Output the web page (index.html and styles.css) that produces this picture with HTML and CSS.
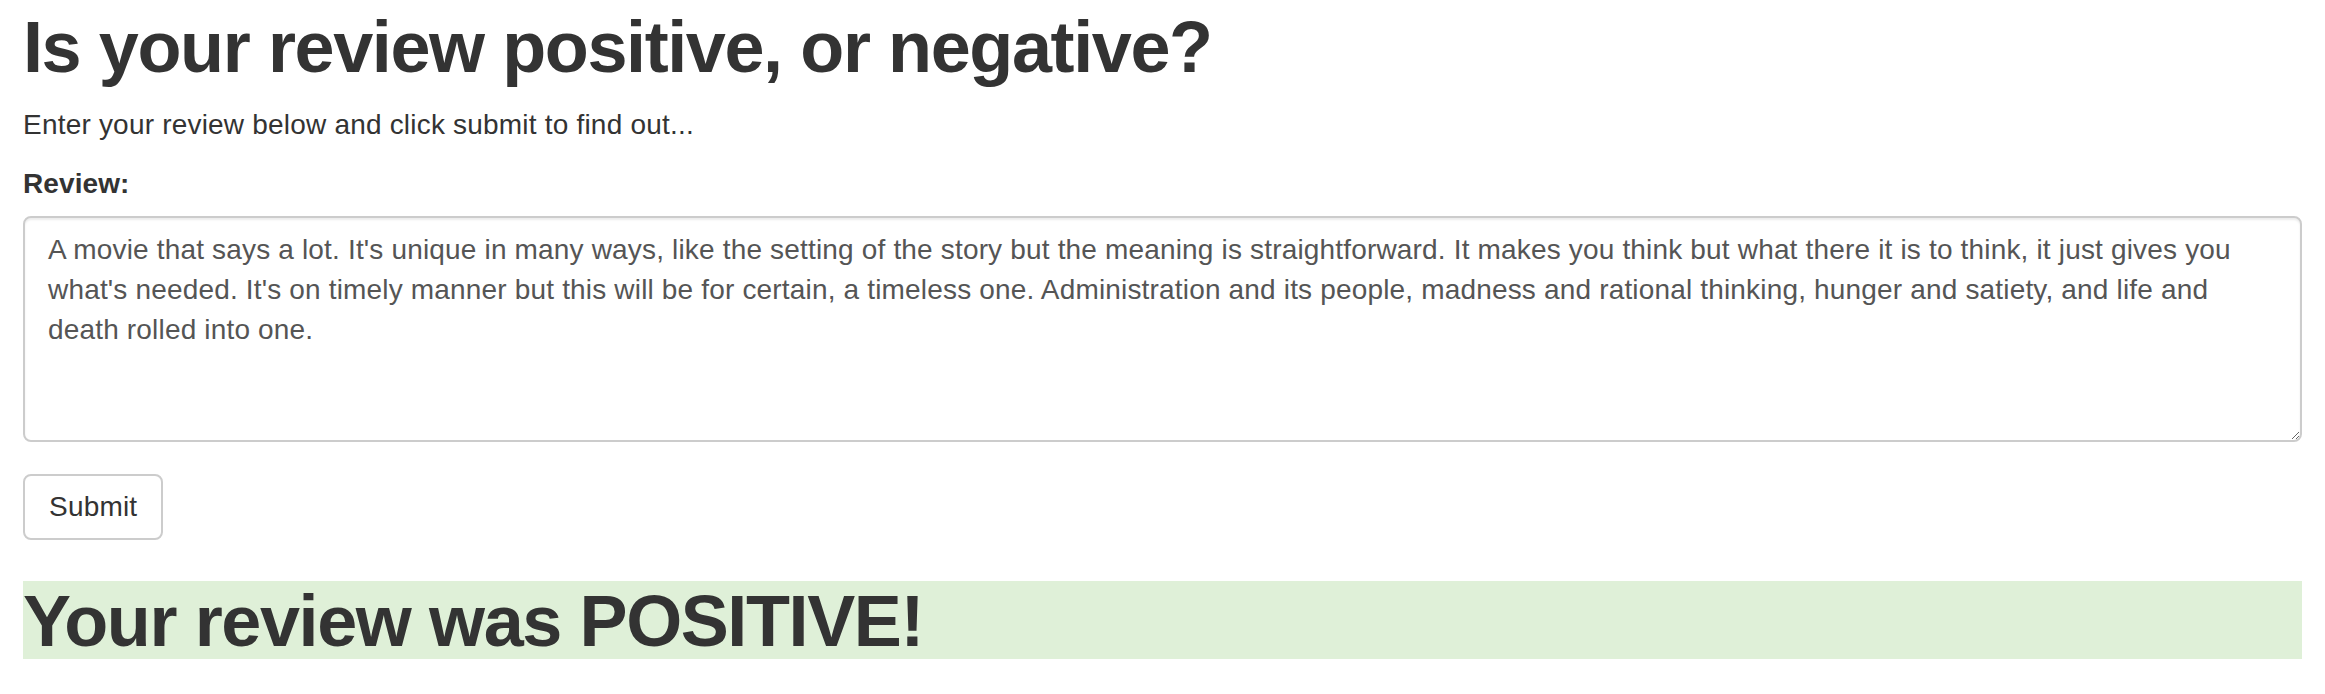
FILE: index.html
```html
<!DOCTYPE html>
<html lang="en">
<head>
<meta charset="utf-8">
<title>Sentiment</title>
<link rel="stylesheet" href="styles.css">
</head>
<body>
<div class="page">
  <h1 class="title">Is your review positive, or negative?</h1>
  <p class="lead">Enter your review below and click submit to find out...</p>
  <form class="review-form">
    <div class="form-group">
      <label class="field-label" for="review">Review:</label>
      <textarea class="review-box" id="review" name="review">A movie that says a lot. It's unique in many ways, like the setting of the story but the meaning is straightforward. It makes you think but what there it is to think, it just gives you what's needed. It's on timely manner but this will be for certain, a timeless one. Administration and its people, madness and rational thinking, hunger and satiety, and life and death rolled into one.</textarea>
    </div>
    <button type="button" class="submit-btn">Submit</button>
  </form>
  <div class="result">Your review was POSITIVE!</div>
</div>
</body>
</html>
```

FILE: styles.css
```css
html, body {
  margin: 0;
  padding: 0;
  background: #fff;
}

body {
  font-family: "Liberation Sans", Arial, Helvetica, sans-serif;
  font-size: 28px;
  line-height: 40px;
  color: #333;
}

.page {
  padding: 0 23px;
  display: flex;
  flex-direction: column;
  align-items: stretch;
}

.title {
  margin: 8px 0 18px;
  font-size: 72px;
  line-height: 79px;
  font-weight: 700;
  letter-spacing: -1.4px;
  color: #333;
}

.lead {
  margin: 0 0 19px;
  letter-spacing: 0.2px;
}

.review-form {
  display: flex;
  flex-direction: column;
  align-items: flex-start;
}

.form-group {
  display: flex;
  flex-direction: column;
  align-self: stretch;
  margin-bottom: 32px;
}

.field-label {
  font-weight: 700;
  margin-bottom: 12px;
  letter-spacing: 0.1px;
}

.review-box {
  box-sizing: border-box;
  width: 100%;
  height: 226px;
  margin: 0;
  padding: 12px 23px;
  border: 2px solid #ccc;
  border-radius: 8px;
  box-shadow: inset 0 2px 2px rgba(0, 0, 0, 0.075);
  font-family: "Liberation Sans", Arial, Helvetica, sans-serif;
  font-size: 28px;
  line-height: 40px;
  letter-spacing: 0.17px;
  color: #555;
  background: #fff;
  resize: vertical;
}

.submit-btn {
  box-sizing: border-box;
  height: 66px;
  margin: 0;
  padding: 11px 24px;
  border: 2px solid #ccc;
  border-radius: 8px;
  background: #fff;
  font-family: "Liberation Sans", Arial, Helvetica, sans-serif;
  font-size: 28px;
  line-height: 40px;
  letter-spacing: 0.2px;
  color: #333;
}

.result {
  margin-top: 41px;
  height: 78px;
  box-sizing: border-box;
  padding-top: 3px;
  background: #dff0d8;
  font-size: 72px;
  line-height: 75px;
  font-weight: 700;
  letter-spacing: -1.4px;
  color: #333;
  white-space: nowrap;
}
```
